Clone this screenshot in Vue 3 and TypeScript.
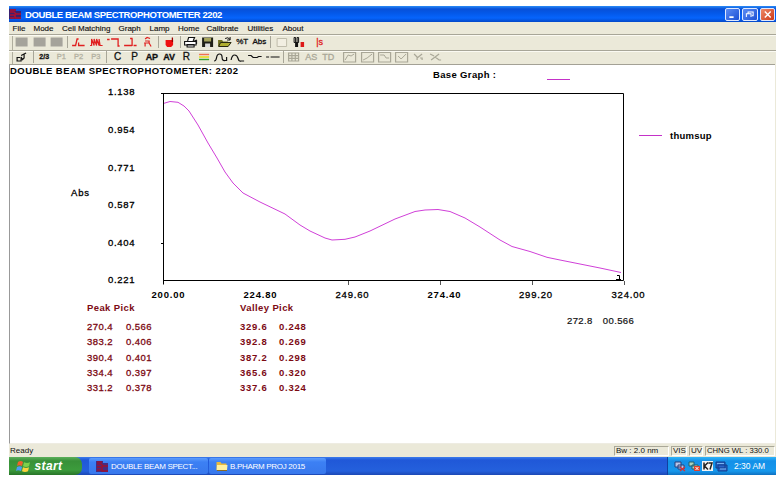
<template>
  <div class="screen">
    <div class="window">
      <header class="title-bar">
        <svg class="app-icon" width="13" height="12" viewBox="0 0 13 12">
          <path d="M0 1h7v2h5v8H0z" fill="#3a2070" />
          <path d="M1 2h6M1 4h4l2 2h5M1 7h5v3h6M1 10h4" stroke="#b01030" stroke-width="1.5" fill="none" />
        </svg>
        <span class="title">DOUBLE BEAM SPECTROPHOTOMETER 2202</span>
        <div class="controls">
          <svg class="ctl" viewBox="0 0 15 13"><path d="M3.5 9.5h5" stroke="#fff" stroke-width="2" /></svg>
          <svg class="ctl" viewBox="0 0 15 13">
            <path d="M5.5 5V3.5h6v4.5H10M3.5 9.5V5.5h5.5v4" stroke="#fff" stroke-width="1.2" fill="none" />
          </svg>
          <svg class="ctl close" viewBox="0 0 15 13"><path d="M4 3l7 7M11 3l-7 7" stroke="#fff" stroke-width="1.7" /></svg>
        </div>
      </header>

      <nav class="menu">
        <span v-for="m in menu" :key="m.label" :style="{ width: m.w + 'px' }">{{ m.label }}</span>
      </nav>

      <div v-for="(bar, b) in toolbars" :key="b" class="toolbar" :class="'bar-' + b">
        <template v-for="(t, i) in bar" :key="i">
          <i v-if="t.sep" class="sep" :class="{ blank: t.blank }" :style="{ width: t.sep + 'px' }"></i>
          <span v-else-if="t.text" class="tool label" :class="t.cls">{{ t.text }}</span>
          <svg v-else class="tool" viewBox="0 0 17 12">
            <path
              v-for="(s, j) in t.shapes"
              :key="j"
              :d="s.d"
              :fill="s.fill || 'none'"
              :stroke="s.stroke || 'none'"
              :stroke-width="s.sw || 1"
            />
          </svg>
        </template>
      </div>

      <main class="workspace">
        <!-- 光谱曲线 -->
        <svg class="chart" width="766" height="235" viewBox="10 65 766 235">
          <text x="10" y="73.5" textLength="228" class="b">DOUBLE BEAM SPECTROPHOTOMETER: 2202</text>
          <text x="433" y="78" textLength="63" class="b">Base Graph :</text>
          <path d="M547 79.5h23" class="series" />
          <text x="71" y="195.5" textLength="18" class="m">Abs</text>
          <text v-for="t in yTicks" :key="t.label" x="108" :y="t.y" textLength="26.5" class="m">{{ t.label }}</text>
          <path d="M161 93.5H623.5V280.5H163.5M163.5 93V284.5M161 243.5h2" class="frame" />
          <path d="M348.5 281v4M440.5 281v4M532.5 281v4M624.5 281v4" class="tick" />
          <path :d="curvePath" class="series curve" />
          <path d="M617 275.5h2.5v4.5M616 279.5h5" class="frame" />
          <text
            v-for="t in xTicks"
            :key="t.label"
            :x="t.x"
            y="298"
            textLength="33"
            :class="t.bold ? 'b' : 'm'"
          >{{ t.label }}</text>
          <path d="M639 135.5h23" class="series" />
          <text x="670" y="139" textLength="41.5" class="b">thumsup</text>
        </svg>

        <div class="results">
          <section v-for="p in picks" :key="p.title" class="pick" :class="p.cls">
            <h4>{{ p.title }}</h4>
            <div v-for="r in p.rows" :key="r[0]" class="row">
              <span>{{ r[0] }}</span><span>{{ r[1] }}</span>
            </div>
          </section>
          <div class="readout"><span>272.8</span><span>00.566</span></div>
        </div>
      </main>

      <footer class="status">
        <span class="ready">Ready</span>
        <span class="cell bw">Bw : 2.0 nm</span>
        <span class="cell vis">VIS</span>
        <span class="cell uv">UV</span>
        <span class="cell wl">CHNG WL : 330.0</span>
      </footer>

      <div class="taskbar">
        <div class="start">
          <svg width="15" height="13" viewBox="0 0 15 13">
            <path d="M2 2q3-2 5 0l-1 4q-3-1.5-5 0z" fill="#f0602c" />
            <path d="M8 2.3q3 1.5 6 0l-1 4q-3 1.5-6 0z" fill="#7ed04a" />
            <path d="M1 7q3-1.5 5 0l-1 4q-3-1.5-5 0z" fill="#4c9cf5" />
            <path d="M7 7.3q3 1.5 6 0l-1 4q-3 1.5-6 0z" fill="#fbd23c" />
          </svg>
          <span>start</span>
        </div>
        <div class="task first">
          <svg width="13" height="11" viewBox="0 0 13 11">
            <path d="M0 0h7v2h5v9H0z" fill="#4a2a7c" />
            <path d="M1 1h5M1 3h4l2 2h5M1 6h5v4h6M1 9h4" stroke="#9c1230" stroke-width="1.5" fill="none" />
          </svg>
          <span>DOUBLE BEAM SPECT...</span>
        </div>
        <div class="task second">
          <svg width="12" height="10" viewBox="0 0 12 10">
            <path d="M.5 1h4l1 1.500h5V9H.5z" fill="#e8b93c" />
            <path d="M1 4h10.500L11 9H.7z" fill="#fff0a0" />
            <path d="M1 9.500h10" stroke="#8a6a20" />
          </svg>
          <span>B.PHARM PROJ 2015</span>
        </div>
        <div class="tray">
          <svg width="54" height="12" viewBox="0 0 54 12">
            <path d="M1 2h6v5H1zM4 5h6v4H4z" fill="#b9c6e8" stroke="#28407c" />
            <path d="M6 7l5 4M11 7l-5 4" stroke="#d23338" stroke-width="1.5" />
            <path d="M15 2h5v4h-5zM18 5h6v4h-6z" fill="#a9d4c0" stroke="#27606c" />
            <path d="M20 6h6v5h-6z" fill="#e0402c" />
            <path d="M21.5 7l3 3M24.5 7l-3 3" stroke="#fff" />
            <path d="M28 1h11v10H28z" fill="#f4f4f4" />
            <path d="M30 2.5v7M34 2.5l-3.500 3.500L34 9.500M34.500 3H38l-2 6.500" stroke="#222" stroke-width="1.5" fill="none" />
            <path d="M42 2h9v6h-9zM44 5h9v6h-9z" fill="#2a62c8" stroke="#123e8c" />
            <path d="M43 3.500h7M46 9h6" stroke="#79b4f0" />
          </svg>
          <span class="clock">2:30 AM</span>
        </div>
      </div>
    </div>
  </div>
</template>

<script setup lang="ts">
import { computed } from 'vue'

interface Shape {
  d: string
  fill?: string
  stroke?: string
  sw?: number
}

interface Tool {
  sep?: number
  blank?: boolean
  text?: string
  cls?: string
  shapes?: Shape[]
}

const menu = [
  { label: 'File', w: 21 },
  { label: 'Mode', w: 28.5 },
  { label: 'Cell Matching', w: 56.5 },
  { label: 'Graph', w: 31 },
  { label: 'Lamp', w: 28.5 },
  { label: 'Home', w: 28.5 },
  { label: 'Calibrate', w: 41 },
  { label: 'Utilities', w: 35 },
  { label: 'About', w: 30 }
]

const RED = '#e02020'
const INK = '#111'
const GREY = '#a9a797'

const line = (d: string, stroke = INK, sw = 1): Tool => ({ shapes: [{ d, stroke, sw }] })
const label = (text: string, cls = ''): Tool => ({ text, cls })
const block = (): Tool => ({ shapes: [{ d: 'M2.5 1.5h12v9h-12z', fill: '#a5a39b' }] })
const box = (d: string): Tool => ({
  shapes: [{ d: 'M2.5 1.5h12v9.5h-12z', stroke: GREY, sw: 1.2 }, { d, stroke: GREY }]
})

const toolbars: Tool[][] = [
  [
    block(), block(), block(),
    { sep: 5.4 },
    line('M2 9.5h3.5L7 3h1.500M8.500 6.500v3h6', RED, 1.3),
    line('M2 9.5h1.500V3L6 9.500V3l2.500 6.500V3L11 9.500V3l1 6.500h2.500', RED, 1.2),
    line('M2 3.500h2.500M6 3h7v7h1.500', RED, 1.3),
    line('M2 9.5h8M10 2.500v7.500M8 2.500h2.500M11.500 9.500h3', RED, 1.3),
    line('M6 3l2-1.500 3 1M6 5h4v2H6v3.500M10 7l2 3.500M5 7h2', RED, 1.2),
    { sep: 4.6 },
    { shapes: [{ d: 'M4.500 4h7.500v5l-2 2H6L4.500 9z', fill: '#ee1010' }, { d: 'M11.300 6V1.500', stroke: '#900', sw: 1.3 }] },
    { sep: 4 },
    {
      shapes: [
        { d: 'M5.5 5l1-3.500h6L11 5M2.5 5.5h11.5v3.500H2.5zM5 8.500h7v2.500H5z', stroke: INK, fill: '#fff', sw: 1.1 },
        { d: 'M12 5l2.5-1v4', stroke: INK }
      ]
    },
    {
      shapes: [
        { d: 'M3 1.5h11v9.5H3z', fill: '#202018' },
        { d: 'M5 2h7v3.5H5z', fill: '#a6a45c' },
        { d: 'M6 7.5h5V11H6z', fill: '#ddd' }
      ]
    },
    {
      shapes: [
        { d: 'M2 4h4l1 1.5h5V10H2z', fill: '#707020' },
        { d: 'M4.5 6.5H15L12 10.5H2.5z', fill: '#b0ae30', stroke: '#282810' },
        { d: 'M9 2.5q3-2 5 1M14 1v3h-3', stroke: INK }
      ]
    },
    label('%T', 'small'),
    label('Abs', 'small'),
    { sep: 4.6 },
    { shapes: [{ d: 'M4 2.5h9.5v8H4z', fill: '#f2efe2', stroke: '#c0bdac' }] },
    {
      shapes: [
        { d: 'M4 1.5h1.5v5H4zM7 1.5h1.5v5H7z', stroke: INK },
        { d: 'M5 6h3v5H5z', fill: INK },
        { d: 'M10.5 6H14v5h-3.5z', fill: '#dd1818' }
      ]
    },
    { sep: 4, blank: true },
    label('|s', 'red')
  ],
  [
    line('M7 6.5H4v3.500h4V6l1.500 3M8 4.500L13 2M11 3v4l-2 2', INK, 1.2),
    { sep: 5 },
    label('2/3', 'tiny'), label('P1', 'dim'), label('P2', 'dim'), label('P3', 'dim'),
    { sep: 4.6 },
    label('C', 'big'), label('P', 'big'), label('AP', 'heavy'), label('AV', 'heavy'), label('R', 'big'),
    {
      shapes: [
        { d: 'M4 3.5h10', stroke: '#f07050', sw: 1.4 },
        { d: 'M4 6h10', stroke: '#e8dc20', sw: 1.6 },
        { d: 'M4 8.5h10', stroke: '#30a030', sw: 1.4 }
      ]
    },
    line('M2 10q2 0 2.500-3.500t3-3.500 2.500 3.500T13 9.500h1.500V6', INK, 1.2),
    line('M2 9q1-5 3.500-5T9 7.500t3 2.500h3', INK, 1.2),
    line('M2 4.5h3l2 2h4l1.500-1h3', INK, 1.2),
    line('M2 6h3M6.5 6h9', INK, 1.2),
    { sep: 4.6 },
    line('M3.5 2h10v8h-10zM3.5 4.7h10M3.5 7.4h10M6.8 2v8M10.2 2v8', GREY, 1.2),
    label('AS', 'off'), label('TD', 'off'),
    { sep: 4.5, blank: true },
    box('M4 9l3-5 3 1 3-2'), box('M4 9l4-2 5-4'), box('M4 4h4l2 3h3'), box('M5 5l3 3 5-5'),
    line('M4 3l3 3v3M7 7l5-4M10 7h2v2', GREY, 1.2),
    line('M3 3l4 2M4 9l8-6M8 6l4 3h2', GREY, 1.2)
  ]
]

const yTicks = [
  { label: '1.138', y: 95.3 },
  { label: '0.954', y: 133 },
  { label: '0.771', y: 170.5 },
  { label: '0.587', y: 208.3 },
  { label: '0.404', y: 245.5 },
  { label: '0.221', y: 282.8 }
]

const xTicks = [
  { label: '200.00', x: 151.5, bold: true },
  { label: '224.80', x: 243.5, bold: true },
  { label: '249.60', x: 335.5 },
  { label: '274.40', x: 427.5, bold: true },
  { label: '299.20', x: 519 },
  { label: '324.00', x: 611.5 }
]

const points: [number, number][] = [
  [164, 103.3], [170, 101.5], [178, 102.3], [184, 106], [189, 111], [198, 125], [208, 143],
  [217, 158], [225, 172], [233, 183], [243, 193], [260, 202], [285, 214], [300, 225],
  [310, 231], [325, 238], [332, 240], [345, 239.3], [355, 237], [370, 231], [395, 219],
  [415, 211.5], [425, 210], [438, 209.5], [450, 211.5], [465, 218], [480, 227], [500, 240],
  [512, 246.5], [530, 251.5], [547, 257.3], [560, 260], [580, 264], [600, 268], [621, 272.5]
]

const curvePath = computed(() => 'M' + points.map((p) => p.join(' ')).join('L'))

const picks = [
  {
    title: 'Peak Pick',
    cls: 'peak',
    rows: [
      ['270.4', '0.566'],
      ['383.2', '0.406'],
      ['390.4', '0.401'],
      ['334.4', '0.397'],
      ['331.2', '0.378']
    ]
  },
  {
    title: 'Valley Pick',
    cls: 'valley',
    rows: [
      ['329.6', '0.248'],
      ['392.8', '0.269'],
      ['387.2', '0.298'],
      ['365.6', '0.320'],
      ['337.6', '0.324']
    ]
  }
]
</script>

<style>
body {
  margin: 0;
  background: #fff;
}
</style>

<style scoped>
.screen {
  width: 779px;
  height: 482px;
  box-sizing: border-box;
  padding: 6px 3px 7px 9px;
  overflow: hidden;
  font-family: "Liberation Sans", Arial, sans-serif;
  color: #111;
  white-space: nowrap;
}

.window {
  display: flex;
  flex-direction: column;
  height: 469px;
  background: #ebe9d9;
}

.title-bar {
  display: flex;
  align-items: center;
  height: 16px;
  background: linear-gradient(#2a8cf8 0, #0850d8 3px, #0458e8 7px, #0664fc 12px, #0448c8 100%);
}

.title {
  flex: 1;
  margin-left: 3px;
  color: #fff;
  font-size: 9.5px;
  font-weight: bold;
  letter-spacing: -0.38px;
}

.controls {
  display: flex;
  gap: 2px;
  padding-right: 1px;
}

.ctl {
  width: 13.5px;
  height: 11px;
  border: 1px solid #dfe9ff;
  border-radius: 2px;
  background: linear-gradient(135deg, #5c8cf4, #1c50d4);
}

.ctl.close {
  background: linear-gradient(135deg, #ee8a68, #cc3818);
}

.menu {
  display: flex;
  align-items: center;
  height: 12px;
  padding-left: 3.5px;
  font-size: 8px;
  -webkit-text-stroke: 0.15px currentColor;
}

.toolbar {
  display: flex;
  align-items: center;
  box-sizing: border-box;
  height: 15.5px;
  padding-left: 4.4px;
  border-top: 1px solid #a8a698;
  box-shadow: inset 0 1px #fbfaf2, inset 3px 0 #ebe9d9, inset 4px 0 #b0ae9e;
}

.bar-1 {
  height: 14.5px;
}

.tool {
  flex: none;
  width: 17.2px;
  height: 12px;
}

.label {
  font-size: 9px;
  line-height: 12px;
  text-align: center;
  -webkit-text-stroke: 0.3px currentColor;
}

.small {
  font-size: 8px;
}

.tiny {
  font-size: 7px;
  font-weight: bold;
}

.big {
  font-size: 10px;
}

.heavy {
  font-weight: bold;
}

.dim {
  font-size: 7.5px;
  color: #b3b1a2;
}

.off {
  color: #aaa898;
}

.red {
  color: #e02020;
}

.sep {
  flex: none;
  height: 12px;
  background: linear-gradient(#a8a698, #a8a698) center / 1px 100% no-repeat;
}

.sep.blank {
  background: none;
}

.workspace {
  height: 380px;
  box-sizing: border-box;
  margin-right: 1px;
  border-left: 1px solid #999;
  border-top: 1px solid #a3a195;
  border-bottom: 1px solid #eeece2;
  background: #fff;
}

.chart {
  display: block;
}

.chart text {
  font-size: 9.5px;
  fill: #000;
}

.chart text.b {
  font-weight: bold;
}

.chart text.m {
  stroke: #000;
  stroke-width: 0.3px;
}

.series {
  fill: none;
  stroke: #c432c8;
  stroke-width: 1;
  shape-rendering: crispEdges;
}

.curve {
  stroke: #d040d8;
  shape-rendering: auto;
}

.frame {
  fill: none;
  stroke: #000;
}

.tick {
  stroke: #555;
}

.results {
  display: flex;
  padding: 1px 0 0 77px;
  font-size: 9.5px;
}

.pick {
  width: 153px;
  color: #7c0a14;
}

.pick h4 {
  margin: 0 0 5px;
  font-size: 9.5px;
  line-height: 13px;
  letter-spacing: 0.4px;
}

.row {
  display: flex;
  gap: 12px;
  height: 15.3px;
  line-height: 15px;
  letter-spacing: 0.45px;
}

.row span {
  width: 27px;
}

.peak .row {
  -webkit-text-stroke: 0.3px currentColor;
}

.valley .row {
  font-weight: bold;
  letter-spacing: 0.75px;
}

.readout {
  display: flex;
  align-self: flex-start;
  gap: 10px;
  margin: 14px 0 0 174px;
  line-height: 12px;
  letter-spacing: 0.4px;
  -webkit-text-stroke: 0.2px currentColor;
}

.status {
  display: flex;
  align-items: center;
  height: 13px;
  font-size: 8px;
}

.ready {
  flex: 1;
  padding-left: 1px;
}

.cell {
  box-sizing: border-box;
  height: 10px;
  margin-right: 2px;
  padding-left: 1px;
  border: 1px solid #aaa898;
  border-right-color: #fff;
  border-bottom-color: #fff;
  line-height: 8px;
}

.bw {
  width: 55px;
}

.vis {
  width: 16px;
}

.uv {
  width: 14px;
}

.wl {
  width: 70px;
  margin-right: 1px;
  font-size: 7.7px;
}

.taskbar {
  display: flex;
  height: 18px;
  background: linear-gradient(#3c7cec 0, #2058d8 3px, #2460dc 14px, #1c48b4 100%);
  color: #fff;
  font-size: 8px;
}

.start {
  display: flex;
  align-items: center;
  gap: 3.5px;
  box-sizing: border-box;
  width: 73px;
  padding-left: 7px;
  border-radius: 0 7px 7px 0;
  background: linear-gradient(#5cb05c 0, #389038 4px, #3c9c3c 13px, #287428 100%);
  font-size: 12px;
  font-style: italic;
  font-weight: bold;
  letter-spacing: 0.4px;
}

.task {
  display: flex;
  align-items: center;
  gap: 2px;
  box-sizing: border-box;
  height: 16px;
  margin-top: 1px;
  padding-left: 7px;
  border-radius: 2px;
  background: linear-gradient(#5c9cfc, #3c80f4 4px, #3878ec);
  letter-spacing: -0.3px;
}

.task.first {
  width: 119px;
  margin-left: 7px;
}

.task.second {
  width: 117px;
  margin-left: 1px;
}

.tray {
  display: flex;
  align-items: center;
  box-sizing: border-box;
  width: 109px;
  margin-left: auto;
  padding-left: 6px;
  border-left: 1px solid #1040a0;
  background: linear-gradient(#30b4f8 0, #1490e8 4px, #1698ec 14px, #1070c0 100%);
}

.clock {
  margin-left: 6px;
  font-size: 8.5px;
}
</style>
